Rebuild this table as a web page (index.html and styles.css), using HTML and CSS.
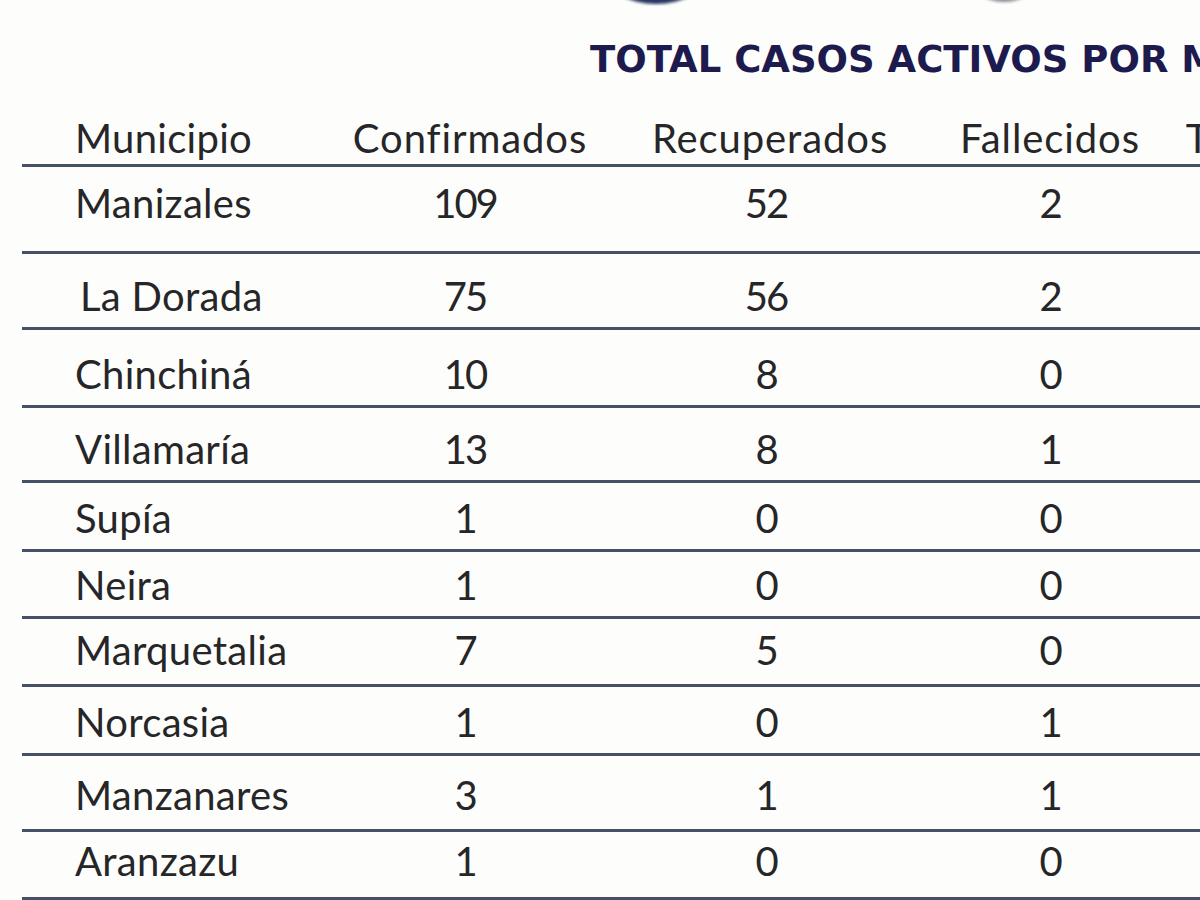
FILE: index.html
```html
<!DOCTYPE html>
<html lang="es">
<head>
<meta charset="utf-8">
<title>Total casos activos por municipio</title>
<link rel="stylesheet" href="styles.css">
</head>
<body>
<div class="page">
  <div class="deco">
    <span class="blob blob-navy"></span>
    <span class="blob blob-gray"></span>
  </div>
  <h1 class="title">TOTAL CASOS ACTIVOS POR MUNICIPIO</h1>
  <div class="table">
    <div class="row head">
      <div class="cell name">Municipio</div>
      <div class="cell num">Confirmados</div>
      <div class="cell num">Recuperados</div>
      <div class="cell num">Fallecidos</div>
      <div class="cell total">Total activos</div>
    </div>
    <div class="row r1">
      <div class="cell name">Manizales</div>
      <div class="cell num c1">109</div>
      <div class="cell num c2">52</div>
      <div class="cell num c3">2</div>
      <div class="cell total">55</div>
    </div>
    <div class="row r2">
      <div class="cell name indent">La Dorada</div>
      <div class="cell num c1">75</div>
      <div class="cell num c2">56</div>
      <div class="cell num c3">2</div>
      <div class="cell total">17</div>
    </div>
    <div class="row r3">
      <div class="cell name">Chinchiná</div>
      <div class="cell num c1">10</div>
      <div class="cell num c2">8</div>
      <div class="cell num c3">0</div>
      <div class="cell total">2</div>
    </div>
    <div class="row r4">
      <div class="cell name">Villamaría</div>
      <div class="cell num c1">13</div>
      <div class="cell num c2">8</div>
      <div class="cell num c3">1</div>
      <div class="cell total">4</div>
    </div>
    <div class="row r5">
      <div class="cell name">Supía</div>
      <div class="cell num c1">1</div>
      <div class="cell num c2">0</div>
      <div class="cell num c3">0</div>
      <div class="cell total">1</div>
    </div>
    <div class="row r6">
      <div class="cell name">Neira</div>
      <div class="cell num c1">1</div>
      <div class="cell num c2">0</div>
      <div class="cell num c3">0</div>
      <div class="cell total">1</div>
    </div>
    <div class="row r7">
      <div class="cell name">Marquetalia</div>
      <div class="cell num c1">7</div>
      <div class="cell num c2">5</div>
      <div class="cell num c3">0</div>
      <div class="cell total">2</div>
    </div>
    <div class="row r8">
      <div class="cell name">Norcasia</div>
      <div class="cell num c1">1</div>
      <div class="cell num c2">0</div>
      <div class="cell num c3">1</div>
      <div class="cell total">0</div>
    </div>
    <div class="row r9">
      <div class="cell name">Manzanares</div>
      <div class="cell num c1">3</div>
      <div class="cell num c2">1</div>
      <div class="cell num c3">1</div>
      <div class="cell total">1</div>
    </div>
    <div class="row r10">
      <div class="cell name">Aranzazu</div>
      <div class="cell num c1">1</div>
      <div class="cell num c2">0</div>
      <div class="cell num c3">0</div>
      <div class="cell total">1</div>
    </div>
  </div>
</div>
</body>
</html>
```

FILE: styles.css
```css
html, body {
  margin: 0;
  padding: 0;
  background: #fdfdfb;
  overflow: hidden;
}

.page {
  width: 1200px;
  height: 900px;
  overflow: hidden;
  font-family: "Lato", "Liberation Sans", sans-serif;
  color: #262628;
}

.deco {
  display: flex;
  height: 6px;
  overflow: hidden;
}

.blob {
  display: block;
  border-radius: 50%;
  flex: none;
}

.blob-navy {
  width: 100px;
  height: 60px;
  margin-top: -56px;
  margin-left: 606px;
  background: #27365f;
  filter: blur(1.5px);
}

.blob-gray {
  width: 60px;
  height: 40px;
  margin-top: -38px;
  margin-left: 268px;
  background: #8a8e96;
  filter: blur(1.5px);
}

.title {
  margin: 32px 0 0 590px;
  font-family: "DejaVu Sans", "Lato", sans-serif;
  font-size: 37px;
  line-height: 44px;
  font-weight: 700;
  color: #1d1a4e;
  white-space: nowrap;
  letter-spacing: 0;
}

.table {
  margin-left: 22px;
  width: 1400px;
  margin-top: 5px;
}

.row {
  display: grid;
  grid-template-columns: 318px 260px 340px 220px 260px;
  align-items: end;
  border-bottom: 3px solid #454f66;
  box-sizing: border-box;
  font-size: 40px;
  line-height: 46px;
  padding-bottom: 8px;
}

.row.head { height: 80px; padding-bottom: 3px; }
.row.r1 { height: 87px; padding-bottom: 25px; }
.row.r2 { height: 76px; }
.row.r3 { height: 78px; }
.row.r4 { height: 75px; }
.row.r5 { height: 69px; }
.row.r6 { height: 67px; }
.row.r7 { height: 68px; padding-bottom: 11px; }
.row.r8 { height: 69px; }
.row.r9 { height: 76px; padding-bottom: 11px; }
.row.r10 { height: 68px; padding-bottom: 13px; }

.cell {
  white-space: nowrap;
}

.name {
  padding-left: 53px;
  letter-spacing: 0.3px;
}

.name.indent { padding-left: 58px; }

.head .num {
  letter-spacing: 0.9px;
}

.num {
  text-align: center;
  letter-spacing: -2px;
}

.num.c1 { padding-right: 10px; }
.num.c2 { padding-right: 8px; }

.total {
  text-align: center;
  padding-left: 10px;
}
```
